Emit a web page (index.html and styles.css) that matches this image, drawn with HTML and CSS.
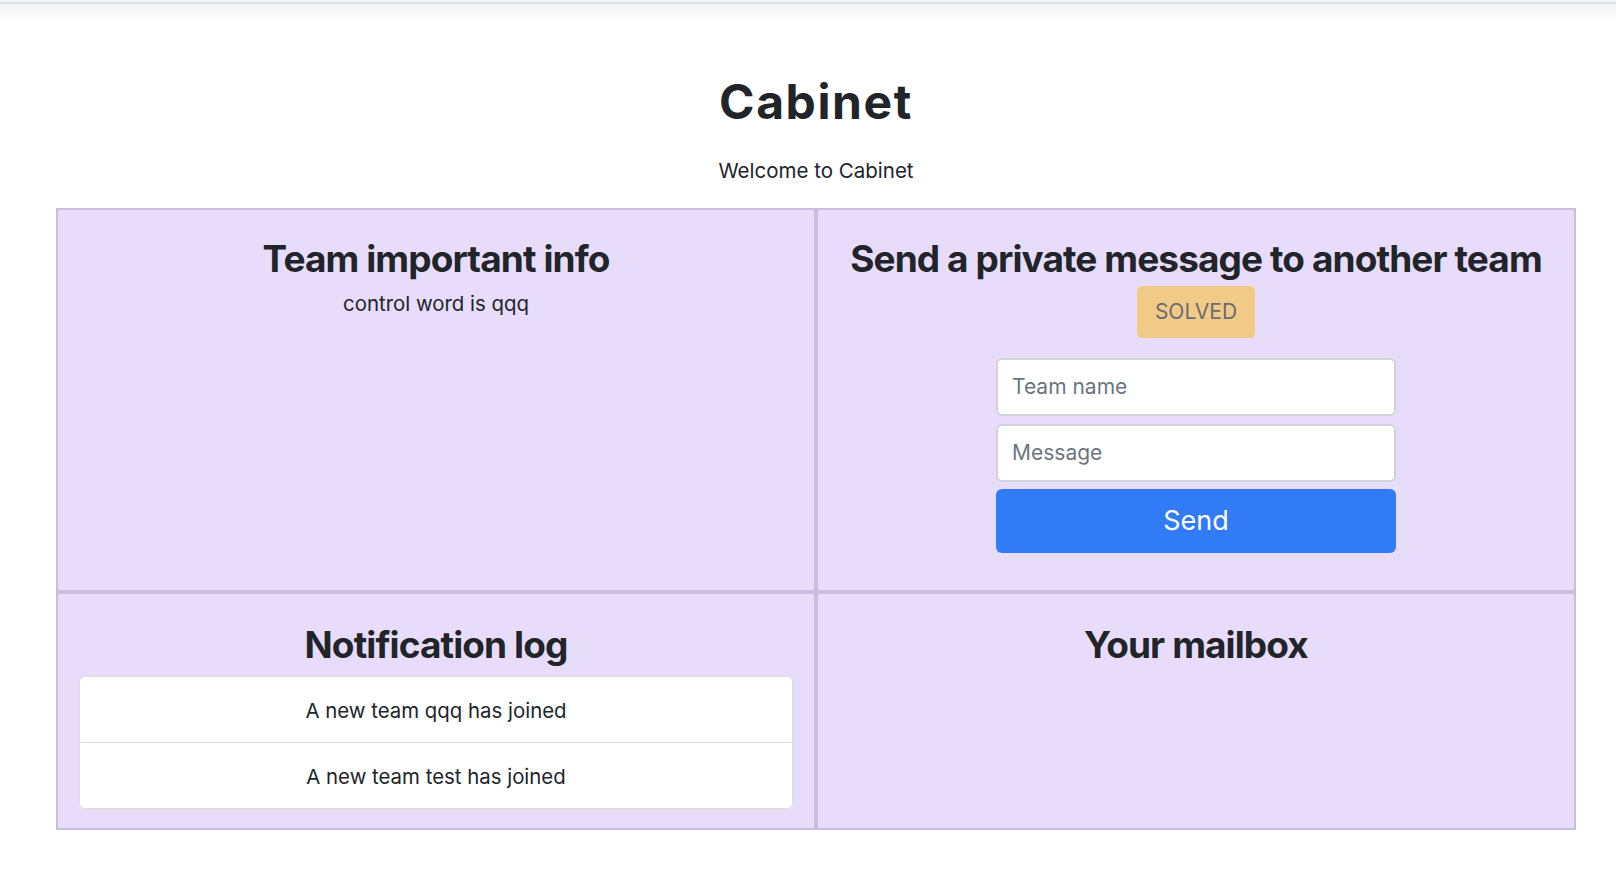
FILE: index.html
```html
<!DOCTYPE html>
<html lang="en">
<head>
<meta charset="utf-8">
<title>Cabinet</title>
<link rel="stylesheet" href="styles.css">
</head>
<body>
<div class="topbar"></div>
<main class="page">
  <header class="header">
    <h1 class="title">Cabinet</h1>
    <p class="subtitle">Welcome to Cabinet</p>
  </header>
  <section class="board">
    <div class="cell cell-top">
      <h3 class="cell-title tight">Team important info</h3>
      <p class="info">control word is qqq</p>
    </div>
    <div class="cell cell-top">
      <h3 class="cell-title badge-gap">Send a private message to another team</h3>
      <span class="badge">SOLVED</span>
      <form class="msg-form">
        <input class="field" type="text" placeholder="Team name">
        <input class="field" type="text" placeholder="Message">
        <button class="send" type="button">Send</button>
      </form>
    </div>
    <div class="cell cell-bottom">
      <h3 class="cell-title">Notification log</h3>
      <ul class="log">
        <li class="log-item">A new team qqq has joined</li>
        <li class="log-item">A new team test has joined</li>
      </ul>
    </div>
    <div class="cell cell-bottom">
      <h3 class="cell-title">Your mailbox</h3>
    </div>
  </section>
</main>
</body>
</html>
```
FILE: styles.css
```css
* { box-sizing: border-box; }

html, body {
  margin: 0;
  padding: 0;
  background: #ffffff;
}

body {
  font-family: Inter, "Noto Sans", "Liberation Sans", sans-serif;
  color: #212529;
  font-size: 21px;
  line-height: 1.5;
}

.topbar {
  height: 22px;
  background: linear-gradient(to bottom, #f4f4f4 0, #f4f4f4 2px, #dde2e6 2px, #dde2e6 4px, #f3f3f3 4px, #ffffff 22px);
}

.page {
  width: 1520px;
  margin-left: 56px;
}

.header {
  text-align: center;
  padding-top: 53px;
}

.title {
  margin: 0 0 25px;
  font-size: 48px;
  line-height: 54px;
  font-weight: 700;
  letter-spacing: 1.6px;
}

.subtitle {
  margin: 0 0 21px;
  font-size: 20.5px;
  line-height: 33px;
}

.board {
  display: grid;
  grid-template-columns: 760px 760px;
  grid-template-rows: 384px 238px;
}

.cell {
  background: #e7dcfa;
  border: 2px solid #c9bde3;
  text-align: center;
  padding: 26px 21px 20px;
  display: flex;
  flex-direction: column;
  align-items: center;
}

.cell-bottom {
  padding-top: 28px;
}

.cell-title {
  margin: 0 0 8px;
  font-size: 37px;
  line-height: 45.6px;
  font-weight: 700;
  letter-spacing: -0.9px;
  white-space: nowrap;
  flex-shrink: 0;
}

.cell-title.tight { margin-bottom: 5px; }
.cell-title.badge-gap { margin-bottom: 4px; }

.info {
  margin: 0;
  font-size: 20.4px;
  line-height: 33px;
}

.badge {
  display: inline-block;
  height: 52px;
  line-height: 52px;
  padding: 0 18px;
  background: #f1ca87;
  color: #6b6b73;
  border-radius: 5px;
  font-size: 21px;
}

.msg-form {
  margin-top: 20px;
  width: 400px;
  display: flex;
  flex-direction: column;
  gap: 8px;
}

.field {
  height: 58px;
  width: 100%;
  border: 2px solid #d0d4da;
  border-radius: 6px;
  background: #ffffff;
  padding: 0 14px;
  font-family: inherit;
  font-size: 21px;
  color: #212529;
  outline: none;
}

.field::placeholder { color: #6c757d; }

.send {
  margin-top: -1px;
  height: 64px;
  width: 100%;
  border: none;
  border-radius: 6px;
  background: #317cf6;
  color: #ffffff;
  font-family: inherit;
  font-size: 27px;
  cursor: pointer;
}

.log {
  list-style: none;
  margin: 0;
  padding: 0;
  width: 100%;
  flex-shrink: 0;
  border: 1px solid #dcdcdc;
  border-radius: 6px;
  background: #ffffff;
  overflow: hidden;
}

.log-item {
  padding: 17px 20px 15px;
  line-height: 33px;
  font-size: 20.4px;
}

.log-item + .log-item {
  border-top: 1px solid #dcdcdc;
}
```
